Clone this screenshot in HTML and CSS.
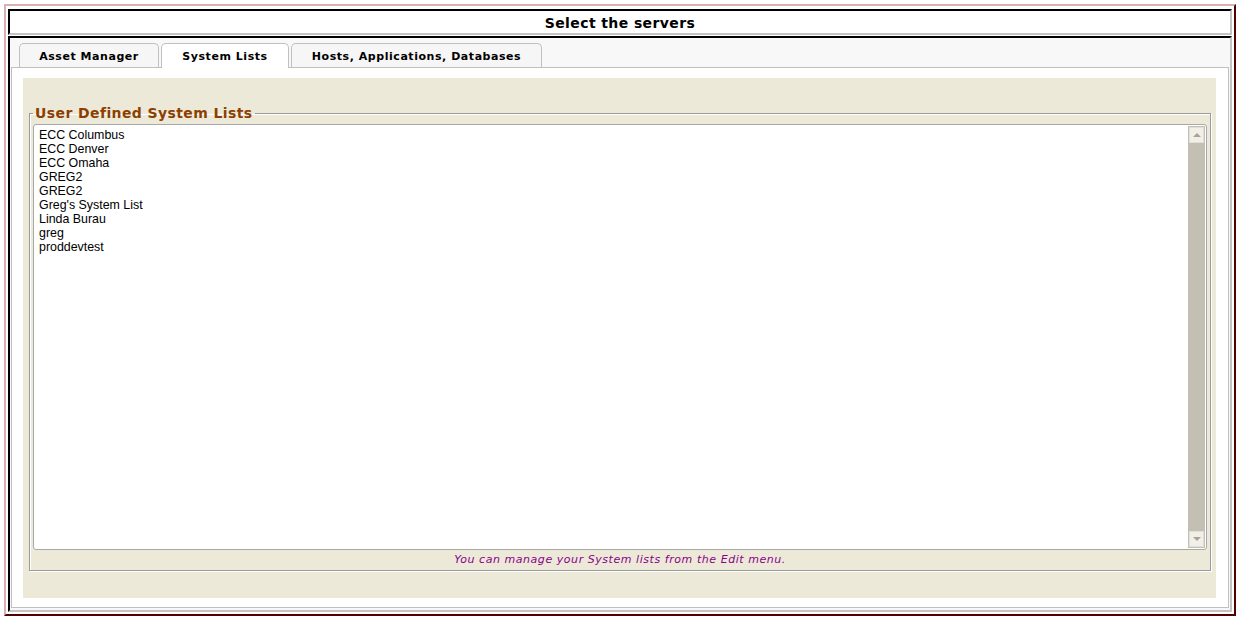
FILE: index.html
```html
<!DOCTYPE html>
<html>
<head>
<meta charset="utf-8">
<title>Select the servers</title>
<link rel="stylesheet" href="styles.css">
</head>
<body>
<div class="frame">
  <div class="title">Select the servers</div>
  <div class="panel">
    <div class="tabs">
      <div class="tab tab-am">Asset Manager</div>
      <div class="tab tab-sl active">System Lists</div>
      <div class="tab tab-ha">Hosts, Applications, Databases</div>
    </div>
    <div class="content">
      <div class="beige">
        <fieldset class="group">
          <legend>User Defined System Lists</legend>
          <div class="listbox">
            <ul class="items">
              <li>ECC Columbus</li>
              <li>ECC Denver</li>
              <li>ECC Omaha</li>
              <li>GREG2</li>
              <li>GREG2</li>
              <li>Greg's System List</li>
              <li>Linda Burau</li>
              <li>greg</li>
              <li>proddevtest</li>
            </ul>
            <div class="scrollbar">
              <div class="sbtn"><span class="arrow up"></span></div>
              <div class="track"></div>
              <div class="sbtn"><span class="arrow down"></span></div>
            </div>
          </div>
          <div class="note">You can manage your System lists from the Edit menu.</div>
        </fieldset>
      </div>
    </div>
  </div>
</div>
</body>
</html>
```

FILE: styles.css
```css
html, body {
  margin: 0;
  padding: 0;
  background: #ffffff;
}
body {
  font-family: "DejaVu Sans", Verdana, sans-serif;
  color: #000;
}
.frame {
  box-sizing: border-box;
  margin: 4px;
  width: 1232px;
  height: 612px;
  border-top: 2px solid #dbb0b0;
  border-left: 2px solid #dbb0b0;
  border-right: 2px solid #520000;
  border-bottom: 2px solid #520000;
  padding: 3px 2px 2px 2px;
  display: flex;
  flex-direction: column;
  gap: 1px;
}
.title {
  box-sizing: border-box;
  height: 26px;
  border-top: 2px solid #000;
  border-left: 2px solid #000;
  border-right: 2px solid #c4c4c4;
  border-bottom: 2px solid #c4c4c4;
  text-align: center;
  font-weight: bold;
  font-size: 14px;
  line-height: 24px;
  letter-spacing: 0.4px;
}
.panel {
  flex: 1;
  box-sizing: border-box;
  border-top: 2px solid #000;
  border-left: 2px solid #000;
  border-right: 2px solid #c4c4c4;
  border-bottom: 2px solid #c4c4c4;
  background: #f8f8f8;
  display: flex;
  flex-direction: column;
  padding: 5px 1px 2px 1px;
}
.tabs {
  display: flex;
  gap: 2px;
  padding-left: 8px;
  height: 24px;
  position: relative;
  z-index: 1;
}
.tab {
  box-sizing: border-box;
  height: 24px;
  border: 1px solid #c0c0c0;
  border-bottom: none;
  border-radius: 5px 5px 0 0;
  background: #f6f6f6;
  font-size: 11px;
  font-weight: bold;
  letter-spacing: 0.55px;
  text-align: center;
  line-height: 25px;
}
.tab-am { width: 140px; }
.tab-sl { width: 128px; }
.tab-ha { width: 251px; }
.tab.active {
  background: #ffffff;
  height: 25px;
}
.content {
  flex: 1;
  box-sizing: border-box;
  border: 1px solid #c0c0c0;
  background: #ffffff;
  padding: 10px 12px 9px 11px;
  display: flex;
}
.beige {
  flex: 1;
  background: #ece9d8;
  padding: 27px 5px 27px 6px;
  display: flex;
}
.group {
  flex: 1;
  margin: 0;
  border: 1px solid #9a9a9a;
  box-shadow: inset 1px 1px 0 #ffffff, 1px 1px 0 #ffffff;
  padding: 3px 3px 0 3px;
  display: flex;
  flex-direction: column;
  min-width: 0;
}
.group legend {
  color: #8c3f00;
  font-weight: bold;
  font-size: 14px;
  padding: 0 2px;
  margin-left: 0;
  letter-spacing: 0.4px;
}
.listbox {
  flex: 1;
  background: #ffffff;
  border: 1px solid #a8a8a8;
  border-radius: 3px;
  display: flex;
  padding: 1px;
}
.items {
  flex: 1;
  list-style: none;
  margin: 0;
  padding: 2px 4px;
  font-family: "Liberation Sans", Arial, sans-serif;
  font-size: 12.4px;
  line-height: 14px;
}
.scrollbar {
  width: 17px;
  display: flex;
  flex-direction: column;
  background: #c3bfb3;
}
.sbtn {
  box-sizing: border-box;
  height: 16px;
  margin: 1px;
  background: #f1efe8;
  border: 1px solid #e2dfd6;
  display: flex;
  align-items: center;
  justify-content: center;
}
.track {
  flex: 1;
}
.arrow {
  width: 0;
  height: 0;
  border-left: 4px solid transparent;
  border-right: 4px solid transparent;
}
.arrow.up { border-bottom: 4px solid #a7a496; }
.arrow.down { border-top: 4px solid #a7a496; }
.note {
  text-align: center;
  font-style: italic;
  font-size: 11px;
  color: #8b008b;
  line-height: 20px;
  padding-top: 0;
  letter-spacing: 0.55px;
}
```
